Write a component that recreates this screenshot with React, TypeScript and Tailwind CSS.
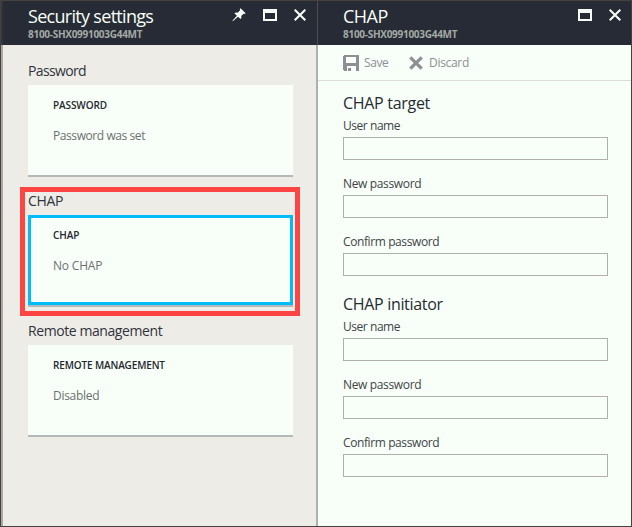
import React from "react";

function PinIcon() {
  return (
    <svg width="14" height="14" viewBox="0 0 14 14" fill="#f8fff8">
      <path d="M8.6 0.2 L13.6 5.2 L12.6 6 L11.6 5.7 L9.2 8.1 C9.6 9.3 9.4 10.3 8.6 11.1 L6 8.7 L0.8 13.2 L0.4 12.8 L4.9 7.7 L2.4 5.2 C3.3 4.4 4.5 4.3 5.7 4.7 L8.1 2.3 L7.8 1.2 Z" />
    </svg>
  );
}

function MaximizeIcon() {
  return <span className="block h-3 w-3.5 border-2 border-t-4 border-[#f8fff8]" />;
}

function CloseIcon() {
  return (
    <svg width="12" height="12" viewBox="0 0 12 12" fill="none" stroke="#f8fff8" strokeWidth="2">
      <path d="M0.7 0.7 L11.3 11.3 M11.3 0.7 L0.7 11.3" />
    </svg>
  );
}

function SaveIcon() {
  return (
    <svg width="16" height="16" viewBox="0 0 16 16" fill="#8e8e94" shapeRendering="crispEdges">
      <path fillRule="evenodd" d="M1 0 H15 L16 1 V16 H13 V11 H4 V16 H1 L0 15 V1 Z M3 2 V8 H13 V2 Z" />
      <path d="M5 13 H8 V16 H5 Z" />
    </svg>
  );
}

function DiscardIcon() {
  return (
    <svg width="14" height="14" viewBox="0 0 14 14" fill="none" stroke="#8e8e94" strokeWidth="3.2">
      <path d="M1.3 1.3 L12.7 12.7 M12.7 1.3 L1.3 12.7" />
    </svg>
  );
}

function BladeHeader({ title, titleClass, pin }: { title: string; titleClass: string; pin?: boolean }) {
  return (
    <header className="flex h-11 shrink-0 justify-between bg-[#272b35] text-[#f8fff8]">
      <div className="pt-[3px]">
        <h1 className={`h-6 whitespace-nowrap text-[18px] leading-6 ${titleClass}`}>{title}</h1>
        <p className="whitespace-nowrap text-[10px] font-bold leading-[13px] tracking-[-0.28px] text-[#a3aaa6]">8100-SHX0991003G44MT</p>
      </div>
      <div className="flex h-7 items-center">
        {pin && <span className="mr-[17px]"><PinIcon /></span>}
        <MaximizeIcon />
        <span className="ml-[17px]"><CloseIcon /></span>
      </div>
    </header>
  );
}

function SettingTile({ section, label, value, selected, labelClass, valueClass, sectionClass }: {
  section: string; label: string; value: string; selected?: boolean;
  labelClass: string; valueClass: string; sectionClass: string;
}) {
  return (
    <section className="relative h-[130px] w-[265px]">
      {selected && <div className="absolute -left-2 -top-[3px] h-[129px] w-[280px] border-[5px] border-[#ff4444]" />}
      <h2 className={`h-[25px] whitespace-nowrap text-[14px] leading-[22px] text-[#30333c] ${sectionClass}`}>{section}</h2>
      <div className={`h-[90px] bg-[#f8fff8] shadow-[0_2px_0_#b3b8b8] ${selected ? "border-[3px] border-[#00bcf8] px-[22px] pt-[10px]" : "px-[25px] pt-[13px]"}`}>
        <h3 className={`whitespace-nowrap text-[10px] font-semibold leading-[15px] text-[#25272e] ${labelClass}`}>{label}</h3>
        <p className={`mt-[14px] whitespace-nowrap text-[12px] leading-[18px] text-[#6c7071] ${valueClass}`}>{value}</p>
      </div>
    </section>
  );
}

function Field({ label, className }: { label: string; className: string }) {
  return (
    <label className="block h-[58px]">
      <span className={`block h-5 whitespace-nowrap text-[12px] leading-[18px] text-[#404348] ${className}`}>{label}</span>
      <input className="block h-[23px] w-[265px] border border-[#aeb0aa] bg-transparent outline-none" />
    </label>
  );
}

function CredentialGroup({ title, className }: { title: string; className: string }) {
  return (
    <section className="h-[201px]">
      <h2 className={`h-[25px] whitespace-nowrap text-[16px] leading-[22px] text-[#272a32] ${className}`}>{title}</h2>
      <Field label="User name" className="tracking-[-0.45px]" />
      <Field label="New password" className="tracking-[-0.35px]" />
      <Field label="Confirm password" className="tracking-[-0.4px]" />
    </section>
  );
}

export default function App() {
  return (
    <main className="flex h-[527px] w-[632px] overflow-hidden border border-[#46413f] bg-[#f8fff8] font-['Open_Sans','Noto_Sans',sans-serif]">
      <div className="flex w-[317px] shrink-0 flex-col border-r-2 border-[#aab0b3] bg-[#eeece7]">
        <div className="-mr-0.5 border-r border-l-2 border-r-[#4e4c4d] border-l-[#34343b] bg-[#272b35] pl-[25px] pr-[11px]">
          <BladeHeader title="Security settings" titleClass="tracking-[-0.7px]" pin />
        </div>
        <div className="flex-1 border-l-2 border-[#aaa7a4] pl-[25px] pt-[15px]">
          <SettingTile section="Password" label="PASSWORD" value="Password was set" sectionClass="tracking-[-0.65px]" labelClass="tracking-[-0.1px]" valueClass="tracking-[-0.42px]" />
          <SettingTile section="CHAP" label="CHAP" value="No CHAP" selected sectionClass="tracking-[-0.3px]" labelClass="tracking-[-0.05px]" valueClass="tracking-[-0.2px]" />
          <SettingTile section="Remote management" label="REMOTE MANAGEMENT" value="Disabled" sectionClass="tracking-[-0.42px]" labelClass="tracking-[-0.14px]" valueClass="tracking-[-0.3px]" />
        </div>
      </div>
      <div className="flex min-w-0 flex-1 flex-col">
        <div className="bg-[#272b35] pl-[25px] pr-[10px]">
          <BladeHeader title="CHAP" titleClass="tracking-[-0.5px]" />
        </div>
        <div className="flex h-9 shrink-0 items-center border-b border-[#d9dcd9] pl-[25px] text-[12px] text-[#8e8e94]">
          <SaveIcon />
          <span className="ml-[5px] w-[45px] tracking-[-0.4px]">Save</span>
          <DiscardIcon />
          <span className="ml-[6px] tracking-[-0.3px]">Discard</span>
        </div>
        <div className="pl-[25px] pt-[11px]">
          <CredentialGroup title="CHAP target" className="tracking-[-0.3px]" />
          <CredentialGroup title="CHAP initiator" className="tracking-[-0.32px]" />
        </div>
      </div>
    </main>
  );
}
